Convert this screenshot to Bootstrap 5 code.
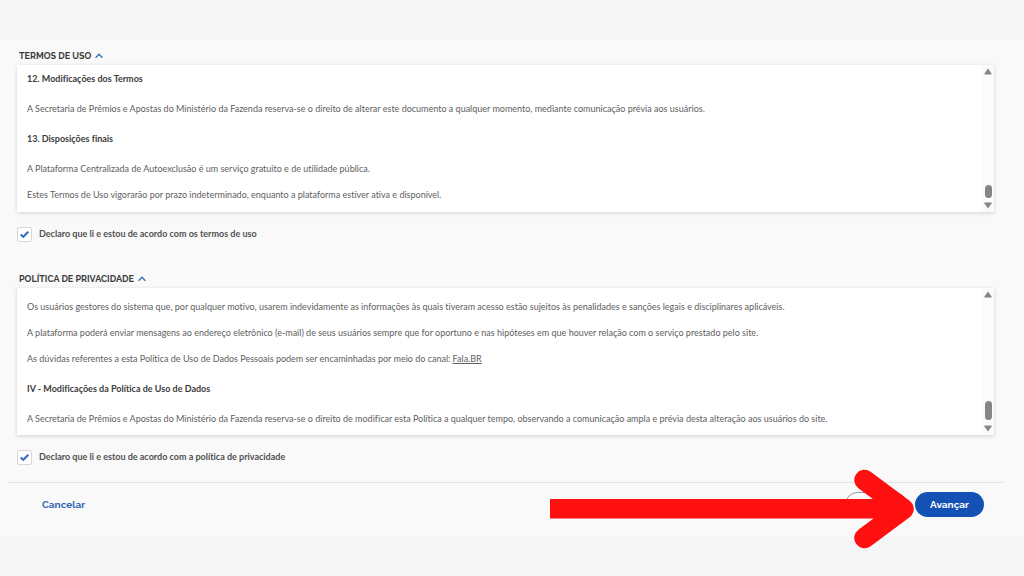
<!DOCTYPE html>
<html lang="pt-BR">
<head>
<meta charset="utf-8">
<meta name="viewport" content="width=device-width, initial-scale=1">
<title>Termos de uso e política de privacidade</title>
<link href="https://cdn.jsdelivr.net/npm/bootstrap@5.3.0/dist/css/bootstrap.min.css" rel="stylesheet">
<style>
  body { background: #f6f6f6; color: #333; font-family: Lato, sans-serif; font-size: 9px; line-height: 16px; font-variant-ligatures: none; padding-top: 39px; }
  .consent-page { background: #f9f9f9; padding: 9px 20px 20px 8px; }
  .consent-body { padding: 0 10px 0 9px; }
  .section-toggle { font-family: Raleway, Lato, sans-serif; font-size: 9px; line-height: 16px; font-weight: 700; color: #3c3c3c; margin-left: 2px; }
  .terms-box { background: #fff; box-shadow: 0 1px 4px rgba(0, 0, 0, .16); margin-top: 1px; }
  .terms-copy { padding: 6px 10px 9px; color: #606060; }
  .privacy-copy { padding: 11px 10px 8px; }
  .terms-copy p { margin: 0 0 10px; }
  .terms-copy p:last-child { margin-bottom: 0; }
  .terms-copy h2 { font-size: 9px; line-height: 16px; font-weight: 700; color: #3c3c3c; margin: 14px 0; }
  .terms-copy h2:first-child { margin-top: 0; }
  .terms-copy a { color: #606060; }
  .scroll-rail { width: 12px; background: #fbfbfb; padding: 3px 0; }
  .scroll-thumb { width: 7px; height: 13px; border-radius: 4px; background: #858585; margin-bottom: 4px; }
  .thumb-long { height: 19px; margin-bottom: 5px; }
  .consent-check { margin-top: 13px; min-height: 18px; font-weight: 700; }
  .consent-check label { color: #505050; padding-left: 7px; }
  .consent-check .form-check-input { width: 15px; height: 15px; margin: 0; border: 1px solid #d8d8d8; border-radius: 2px; background-color: #fff; }
  .consent-check .form-check-input:checked { background-color: #fff; border-color: #d8d8d8; background-size: 13px;
    background-image: url("data:image/svg+xml,%3Csvg xmlns='http://www.w3.org/2000/svg' viewBox='0 0 13 13'%3E%3Cpath fill='none' stroke='%23356bbb' stroke-width='2' d='M2.6 6.500 5.3 8.800 10.3 3.800'/%3E%3C/svg%3E"); }
  .privacy-section { margin-top: 28px; }
  .consent-footer { border-top: 1px solid #e2e2e2; margin-top: 16px; padding: 9px 20px 0 34px; }
  .action-btn { font-family: Raleway, Lato, sans-serif; font-size: 10px; font-weight: 700; line-height: 17px; border-radius: 13px; padding: 4px 12px; height: 25px; width: 69px; white-space: nowrap; }
  .cancel-link { --bs-btn-color: #3465b3; --bs-btn-hover-color: #1351b4; }
  .cancel-link.action-btn { padding: 4px 0; width: auto; }
  .back-btn { background: #fff; border: 1px solid #999; width: 62px; color: #1351b4; }
  .next-btn, .next-btn:hover { background: #1351b4; color: #fff; border: 0; }
  .pointer-arrow { position: absolute; right: 90px; top: -15px; pointer-events: none; }
</style>
</head>
<body class="min-vh-100">
<main class="consent-page">
  <div class="consent-body">
    <section>
      <button type="button" class="btn p-0 border-0 section-toggle d-flex align-items-center gap-1" aria-expanded="true">TERMOS DE USO
        <svg width="8" height="6" viewBox="0 0 8 6" fill="none" stroke="#3b6fbd" stroke-width="1.4" aria-hidden="true"><path d="M.6 4.7 4 1.3l3.4 3.4"/></svg>
      </button>
      <div class="terms-box d-flex">
        <div class="terms-copy flex-grow-1">
          <h2>12. Modificações dos Termos</h2>
          <p>A Secretaria de Prêmios e Apostas do Ministério da Fazenda reserva-se o direito de alterar este documento a qualquer momento, mediante comunicação prévia aos usuários.</p>
          <h2>13. Disposições finais</h2>
          <p>A Plataforma Centralizada de Autoexclusão é um serviço gratuito e de utilidade pública.</p>
          <p>Estes Termos de Uso vigorarão por prazo indeterminado, enquanto a plataforma estiver ativa e disponível.</p>
        </div>
        <div class="scroll-rail d-flex flex-column align-items-center flex-shrink-0" aria-hidden="true">
          <svg width="8" height="7" viewBox="0 0 8 7"><path d="M4 .6 7.7 5.8q.2.7-.5.7H.8Q.1 6.5.3 5.8Z" fill="#858585"/></svg>
          <div class="scroll-thumb mt-auto"></div>
          <svg width="8" height="7" viewBox="0 0 8 7"><path d="M4 6.4 7.7 1.2Q7.9.5 7.2.5H.8Q.1.5.3 1.2Z" fill="#858585"/></svg>
        </div>
      </div>
      <div class="consent-check d-flex align-items-center">
        <input class="form-check-input" type="checkbox" id="acceptTerms" checked>
        <label for="acceptTerms">Declaro que li e estou de acordo com os termos de uso</label>
      </div>
    </section>
    <section class="privacy-section">
      <button type="button" class="btn p-0 border-0 section-toggle d-flex align-items-center gap-1" aria-expanded="true">POLÍTICA DE PRIVACIDADE
        <svg width="8" height="6" viewBox="0 0 8 6" fill="none" stroke="#3b6fbd" stroke-width="1.4" aria-hidden="true"><path d="M.6 4.7 4 1.3l3.4 3.4"/></svg>
      </button>
      <div class="terms-box d-flex">
        <div class="terms-copy privacy-copy flex-grow-1">
          <p>Os usuários gestores do sistema que, por qualquer motivo, usarem indevidamente as informações às quais tiveram acesso estão sujeitos às penalidades e sanções legais e disciplinares aplicáveis.</p>
          <p>A plataforma poderá enviar mensagens ao endereço eletrônico (e-mail) de seus usuários sempre que for oportuno e nas hipóteses em que houver relação com o serviço prestado pelo site.</p>
          <p>As dúvidas referentes a esta Política de Uso de Dados Pessoais podem ser encaminhadas por meio do canal: <a href="#">Fala.BR</a></p>
          <h2>IV - Modificações da Política de Uso de Dados</h2>
          <p>A Secretaria de Prêmios e Apostas do Ministério da Fazenda reserva-se o direito de modificar esta Política a qualquer tempo, observando a comunicação ampla e prévia desta alteração aos usuários do site.</p>
        </div>
        <div class="scroll-rail d-flex flex-column align-items-center flex-shrink-0" aria-hidden="true">
          <svg width="8" height="7" viewBox="0 0 8 7"><path d="M4 .6 7.7 5.8q.2.7-.5.7H.8Q.1 6.5.3 5.8Z" fill="#858585"/></svg>
          <div class="scroll-thumb thumb-long mt-auto"></div>
          <svg width="8" height="7" viewBox="0 0 8 7"><path d="M4 6.4 7.7 1.2Q7.9.5 7.2.5H.8Q.1.5.3 1.2Z" fill="#858585"/></svg>
        </div>
      </div>
      <div class="consent-check d-flex align-items-center">
        <input class="form-check-input" type="checkbox" id="acceptPrivacy" checked>
        <label for="acceptPrivacy">Declaro que li e estou de acordo com a política de privacidade</label>
      </div>
    </section>
  </div>
  <footer class="consent-footer d-flex align-items-center position-relative">
    <button type="button" class="btn border-0 action-btn cancel-link">Cancelar</button>
    <button type="button" class="btn action-btn back-btn ms-auto me-2" aria-label="Voltar"></button>
    <button type="button" class="btn action-btn next-btn">Avançar</button>
    <svg class="pointer-arrow" width="366" height="82" viewBox="0 0 366 82" aria-hidden="true">
      <path d="M2 31H340V50.500H2Z" fill="#ff1010"/>
      <path d="M316.5 12 355.5 41 316.5 70" fill="none" stroke="#ff1010" stroke-width="20.5" stroke-linecap="round" stroke-linejoin="round"/>
      <path d="M325 31H345V50.500H325Z" fill="#ff1010"/>
    </svg>
  </footer>
</main>
<script src="https://cdn.jsdelivr.net/npm/bootstrap@5.3.0/dist/js/bootstrap.bundle.min.js"></script>
</body>
</html>
